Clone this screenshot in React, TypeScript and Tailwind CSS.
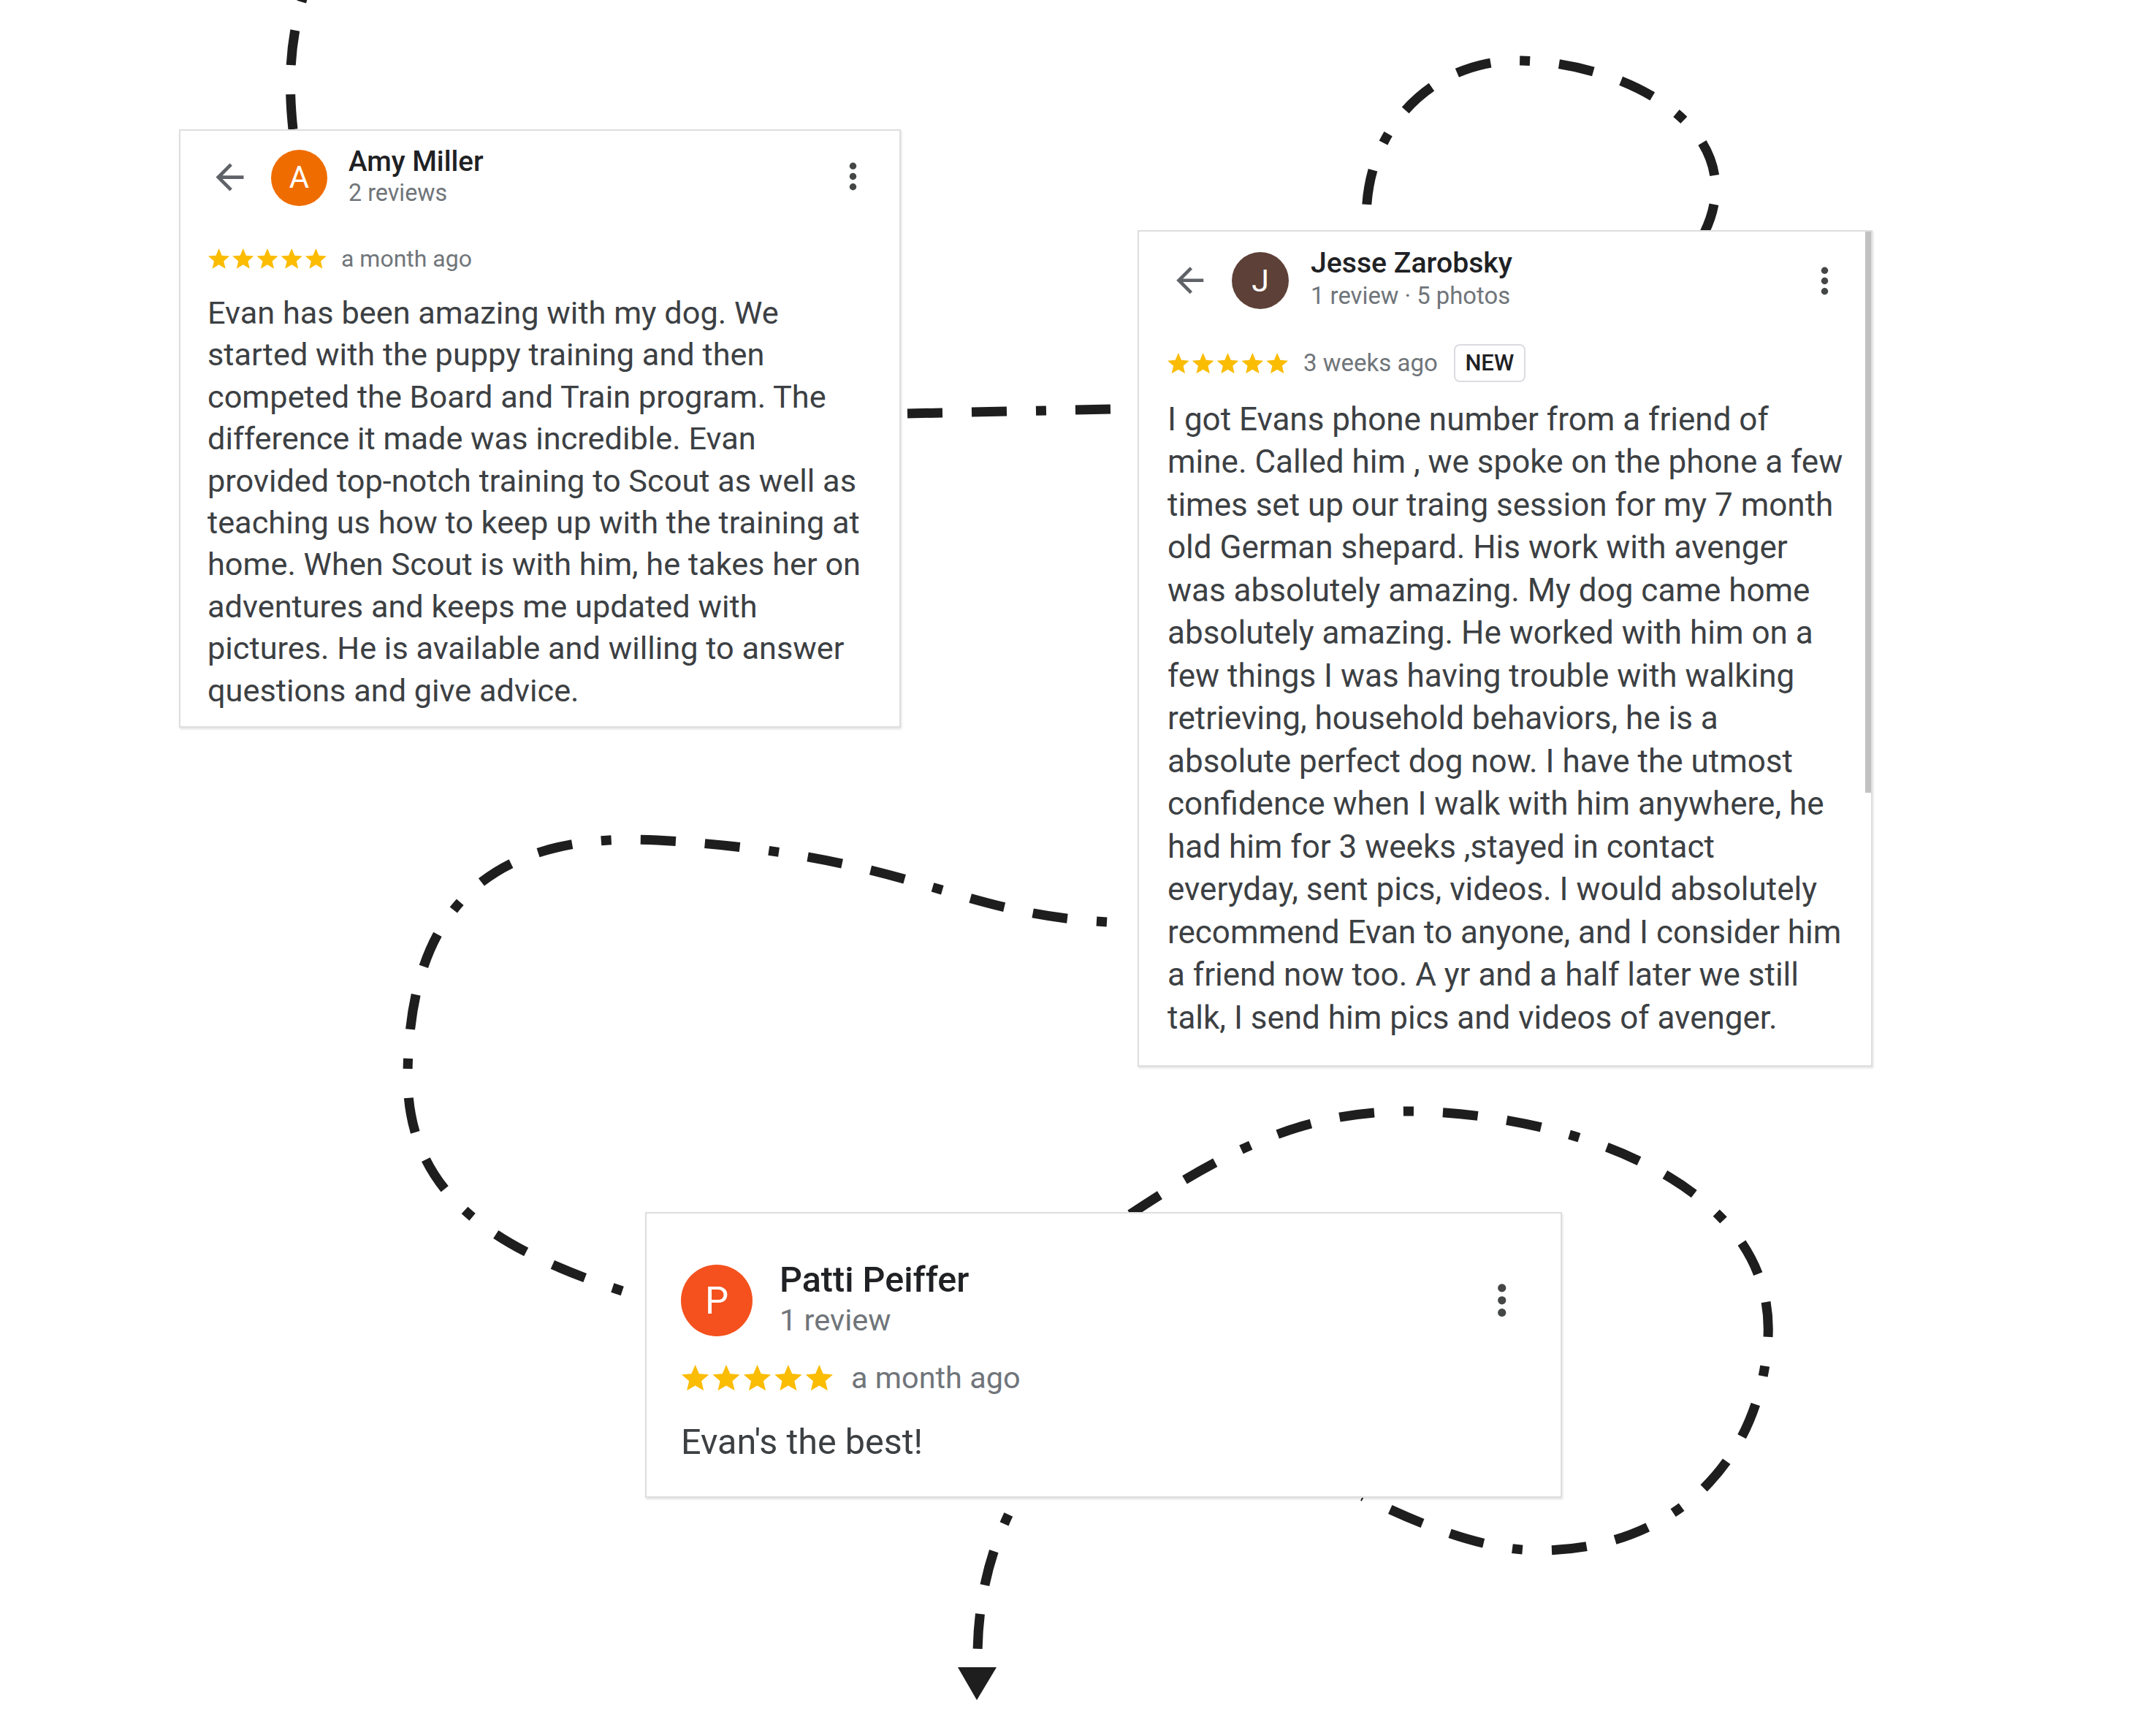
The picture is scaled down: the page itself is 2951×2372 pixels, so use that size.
import React from "react";

const STAR_D =
  "M12 17.27L18.18 21l-1.64-7.03L22 9.24l-7.19-.61L12 2 9.19 8.63 2 9.24l5.46 4.73L5.82 21z";

function Stars({ w }: { w: number }) {
  const h = (w * 19) / 111.2;
  return (
    <svg width={w} height={h} viewBox="0 0 111.2 19" className="shrink-0">
      {[0, 1, 2, 3, 4].map((i) => (
        <path key={i} transform={`translate(${i * 22.8 - 2},-2)`} d={STAR_D} fill="#fbbc04" />
      ))}
    </svg>
  );
}

function BackArrow({ size, className }: { size: number; className?: string }) {
  return (
    <svg width={size} height={size} viewBox="0 0 24 24" className={className}>
      <path
        d="M20 11H7.83l5.59-5.59L12 4l-8 8 8 8 1.41-1.41L7.83 13H20v-2z"
        fill="#5f6368"
      />
    </svg>
  );
}

function MoreVert({ size, className }: { size: number; className?: string }) {
  return (
    <svg width={size} height={size} viewBox="0 0 24 24" className={className}>
      <circle cx="12" cy="6" r="2" fill="#444746" />
      <circle cx="12" cy="12" r="2" fill="#444746" />
      <circle cx="12" cy="18" r="2" fill="#444746" />
    </svg>
  );
}

const amyLines = [
  "Evan has been amazing with my dog. We",
  "started with the puppy training and then",
  "competed the Board and Train program. The",
  "difference it made was incredible. Evan",
  "provided top-notch training to Scout as well as",
  "teaching us how to keep up with the training at",
  "home. When Scout is with him, he takes her on",
  "adventures and keeps me updated with",
  "pictures. He is available and willing to answer",
  "questions and give advice.",
];

const jesseLines = [
  "I got Evans phone number from a friend of",
  "mine. Called him , we spoke on the phone a few",
  "times set up our traing session for my 7 month",
  "old German shepard. His work with avenger",
  "was absolutely amazing. My dog came home",
  "absolutely amazing. He worked with him on a",
  "few things I was having trouble with walking",
  "retrieving, household behaviors, he is a",
  "absolute perfect dog now. I have the utmost",
  "confidence when I walk with him anywhere, he",
  "had him for 3 weeks ,stayed in contact",
  "everyday, sent pics, videos. I would absolutely",
  "recommend Evan to anyone, and I consider him",
  "a friend now too. A yr and a half later we still",
  "talk, I send him pics and videos of avenger.",
];

function Dashes() {
  const common = {
    fill: "none",
    stroke: "#1e1e1e",
    strokeWidth: 13,
    strokeDasharray: "48 40 48 40 14 40",
  } as const;
  return (
    <svg className="absolute left-0 top-0" width={2951} height={2372} viewBox="0 0 2951 2372">
      {/* top line into Amy card */}
      <path {...common} d="M401 177 C395 120, 395 60, 415 -5" />
      {/* Amy -> Jesse */}
      <path {...common} d="M1242 566 L1520 560" />
      {/* loop above Jesse */}
      <path
        {...common}
        strokeDashoffset={50}
        d="M1871 318 C1860 180, 1960 80, 2082 83 C2230 86, 2400 180, 2333 318"
      />
      {/* Jesse -> Patti big left loop */}
      <path
        {...common}
        strokeDashoffset={176}
        d="M1515 1262 C1300 1250, 1250 1170, 900 1150 C620 1135, 560 1300, 558 1470 C556 1650, 700 1720, 886 1778"
      />
      {/* right loop around Patti */}
      <path
        {...common}
        d="M1547 1662 C1700 1560, 1800 1520, 1935 1521 C2150 1525, 2430 1620, 2420 1830 C2410 2010, 2280 2125, 2100 2122 C2020 2120, 1930 2080, 1865 2048"
      />
      {/* down arrow */}
      <path {...common} strokeDashoffset={150} d="M1392 2050 C1365 2100, 1338 2170, 1338 2268" />
      <polygon points="1311,2282 1364,2282 1337,2327" fill="#1e1e1e" />
    </svg>
  );
}

export default function App() {
  return (
    <div className="relative w-[2951px] h-[2372px] bg-white overflow-hidden font-['Roboto','Noto_Sans',sans-serif]">
      <Dashes />

      {/* Amy Miller */}
      <div className="absolute left-[245px] top-[177px] w-[988px] h-[819px] bg-white border-2 border-[#dedede] shadow-[1px_2px_3px_rgba(0,0,0,0.12)]">
        <div className="flex items-start pl-[38.5px] pr-[35.5px] pt-[19.5px]">
          <BackArrow size={57} className="mt-[15px] shrink-0" />
          <div className="ml-[28.5px] mt-[6px] w-[77px] h-[77px] rounded-full bg-[#ef6c00] flex items-center justify-center text-white text-[42px] leading-none shrink-0">
            A
          </div>
          <div className="ml-[29px] flex flex-col">
            <div className="text-[38.5px] leading-[44px] font-medium text-[#202124]">Amy Miller</div>
            <div className="mt-[2.5px] text-[32.3px] leading-[38px] text-[#70757a]">2 reviews</div>
          </div>
          <MoreVert size={57} className="ml-auto mt-[14px] shrink-0" />
        </div>
        <div className="mt-[51px] h-[40px] flex items-center pl-[38px] gap-[20px]">
          <Stars w={162} />
          <span className="text-[32px] leading-[40px] text-[#70757a]">a month ago</span>
        </div>
        <div className="mt-[26px] pl-[37px] text-[43.3px] leading-[57.4px] text-[#3c4043]">
          {amyLines.map((l, i) => (
            <div key={i} className="whitespace-nowrap">
              {l}
            </div>
          ))}
        </div>
      </div>

      {/* Jesse Zarobsky */}
      <div className="absolute left-[1557px] top-[315px] w-[1006px] h-[1145px] bg-white border-2 border-[#dedede] shadow-[1px_2px_3px_rgba(0,0,0,0.12)]">
        <div className="absolute right-0 top-0 w-[8px] h-[768px] bg-[#c1c1c1]" />
        <div className="flex items-start pl-[41.75px] pr-[35.5px] pt-[19.5px]">
          <BackArrow size={55.5} className="mt-[19.75px] shrink-0" />
          <div className="ml-[29.75px] mt-[8.5px] w-[78px] h-[78px] rounded-full bg-[#5d4037] flex items-center justify-center text-white text-[43px] leading-none shrink-0">
            J
          </div>
          <div className="ml-[30px] flex flex-col">
            <div className="text-[39.2px] leading-[46px] font-medium text-[#202124]">Jesse Zarobsky</div>
            <div className="mt-[2px] text-[32.8px] leading-[40px] text-[#70757a]">1 review · 5 photos</div>
          </div>
          <MoreVert size={57} className="ml-auto mt-[19px] shrink-0" />
        </div>
        <div className="mt-[46.4px] h-[52px] flex items-center pl-[39px]">
          <Stars w={165} />
          <span className="ml-[21px] text-[33px] leading-[40px] text-[#70757a]">3 weeks ago</span>
          <span className="ml-[22px] w-[98px] h-[52px] border-2 border-[#dadce0] rounded-[8px] flex items-center justify-center text-[31px] font-medium text-[#202124]">
            NEW
          </span>
        </div>
        <div className="mt-[21.75px] pl-[39px] text-[44px] leading-[58.5px] text-[#3c4043]">
          {jesseLines.map((l, i) => (
            <div key={i} className="whitespace-nowrap">
              {l}
            </div>
          ))}
        </div>
      </div>

      {/* Patti Peiffer */}
      <div className="absolute left-[883px] top-[1659px] w-[1255px] h-[391px] bg-white border-2 border-[#dedede] shadow-[1px_2px_3px_rgba(0,0,0,0.12)]">
        <div className="flex items-start pl-[47px] pr-[47px] pt-[63px]">
          <div className="mt-[7px] w-[98px] h-[98px] rounded-full bg-[#f4511e] flex items-center justify-center text-white text-[51px] leading-none shrink-0">
            P
          </div>
          <div className="ml-[37px] flex flex-col">
            <div className="text-[48.5px] leading-[56px] font-medium text-[#202124]">Patti Peiffer</div>
            <div className="mt-[3px] text-[41.5px] leading-[48px] text-[#70757a]">1 review</div>
          </div>
          <MoreVert size={67.5} className="ml-auto mt-[22px] shrink-0" />
        </div>
        <div className="mt-[31px] h-[48px] flex items-center pl-[48px] gap-[25px]">
          <Stars w={207} />
          <span className="text-[41.4px] leading-[48px] text-[#70757a]">a month ago</span>
        </div>
        <div className="mt-[34px] pl-[47px] text-[48.5px] leading-[60px] text-[#3c4043] whitespace-nowrap">
          Evan's the best!
        </div>
      </div>
    </div>
  );
}
